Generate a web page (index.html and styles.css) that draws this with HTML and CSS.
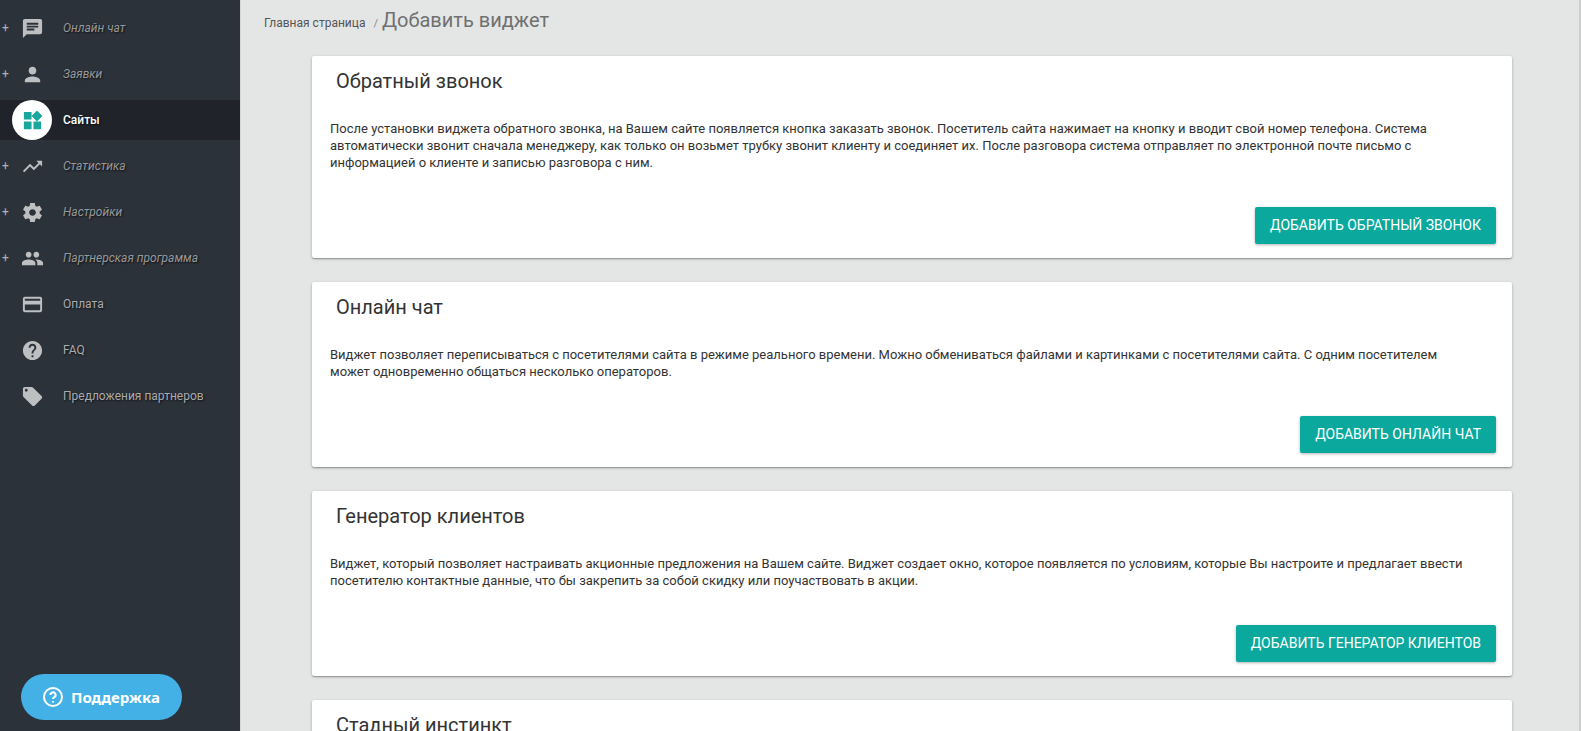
FILE: index.html
```html
<!DOCTYPE html>
<html lang="ru">

<head>
    <meta charset="UTF-8">
    <meta name="viewport" content="width=device-width, initial-scale=1.0">
    <title>Добавить виджет</title>
    <link rel="stylesheet" href="styles.css">
</head>

<body>
    <!-- Боковое меню -->
    <nav class="sidebar">
        <ul class="menu">
            <li>
                <a href="#" class="menu-item has-sub">
                    <span class="menu-icon"><svg viewBox="0 0 24 24"><path d="M20 2H4c-1.100 0-2 .9-2 2v18l4-4h14c1.100 0 2-.9 2-2V4c0-1.100-.9-2-2-2zM6 9h12v2H6V9zm8 5H6v-2h8v2zm4-6H6V6h12v2z"/></svg></span>
                    <span class="menu-text">Онлайн чат</span>
                </a>
            </li>
            <li>
                <a href="#" class="menu-item has-sub">
                    <span class="menu-icon"><svg viewBox="0 0 24 24"><path d="M12 12c2.210 0 4-1.790 4-4s-1.790-4-4-4-4 1.790-4 4 1.790 4 4 4zm0 2c-2.670 0-8 1.340-8 4v2h16v-2c0-2.660-5.330-4-8-4z"/></svg></span>
                    <span class="menu-text">Заявки</span>
                </a>
            </li>
            <li>
                <a href="#" class="menu-item active">
                    <span class="menu-icon"><svg viewBox="0 0 24 24"><path d="M13 13v8h8v-8h-8zM3 21h8v-8H3v8zM3 3v8h8V3H3zm13.660-1.310L11 7.340 16.660 13l5.660-5.660-5.660-5.650z"/></svg></span>
                    <span class="menu-text">Сайты</span>
                </a>
            </li>
            <li>
                <a href="#" class="menu-item has-sub">
                    <span class="menu-icon"><svg viewBox="0 0 24 24"><path d="M16 6l2.290 2.290-4.880 4.880-4-4L2 16.590 3.410 18l6-6 4 4 6.300-6.290L22 12V6z"/></svg></span>
                    <span class="menu-text">Статистика</span>
                </a>
            </li>
            <li>
                <a href="#" class="menu-item has-sub">
                    <span class="menu-icon"><svg viewBox="0 0 24 24"><path d="M19.430 12.980c.04-.32.07-.64.07-.98s-.03-.66-.07-.98l2.110-1.650c.19-.15.24-.42.12-.64l-2-3.460c-.12-.22-.39-.3-.61-.22l-2.490 1c-.52-.4-1.080-.73-1.690-.98l-.38-2.650C14.460 2.180 14.250 2 14 2h-4c-.25 0-.46.18-.49.42l-.38 2.650c-.61.25-1.170.59-1.690.98l-2.490-1c-.23-.09-.49 0-.61.22l-2 3.460c-.13.22-.07.49.12.64l2.110 1.650c-.04.32-.07.65-.07.98s.03.66.07.98l-2.110 1.650c-.19.15-.24.42-.12.64l2 3.460c.12.22.39.3.61.22l2.490-1c.52.4 1.080.73 1.690.98l.38 2.650c.03.24.24.42.49.42h4c.25 0 .46-.18.49-.42l.38-2.650c.61-.25 1.170-.59 1.690-.98l2.490 1c.23.09.49 0 .61-.22l2-3.460c.12-.22.07-.49-.12-.64l-2.110-1.650zM12 15.500c-1.930 0-3.500-1.570-3.500-3.500s1.570-3.500 3.500-3.500 3.500 1.570 3.500 3.500-1.570 3.500-3.500 3.500z"/></svg></span>
                    <span class="menu-text">Настройки</span>
                </a>
            </li>
            <li>
                <a href="#" class="menu-item has-sub">
                    <span class="menu-icon"><svg viewBox="0 0 24 24"><path d="M16 11c1.660 0 2.990-1.340 2.990-3S17.660 5 16 5c-1.660 0-3 1.340-3 3s1.340 3 3 3zm-8 0c1.660 0 2.990-1.340 2.990-3S9.660 5 8 5C6.340 5 5 6.340 5 8s1.340 3 3 3zm0 2c-2.330 0-7 1.170-7 3.500V19h14v-2.500c0-2.330-4.670-3.500-7-3.500zm8 0c-.29 0-.62.02-.97.05 1.160.84 1.970 1.970 1.970 3.450V19h6v-2.500c0-2.330-4.670-3.500-7-3.500z"/></svg></span>
                    <span class="menu-text">Партнерская программа</span>
                </a>
            </li>
            <li>
                <a href="#" class="menu-item">
                    <span class="menu-icon"><svg viewBox="0 0 24 24"><path d="M20 4H4c-1.110 0-1.990.89-1.990 2L2 18c0 1.110.89 2 2 2h16c1.110 0 2-.89 2-2V6c0-1.110-.89-2-2-2zm0 14H4v-6h16v6zm0-10H4V6h16v2z"/></svg></span>
                    <span class="menu-text">Оплата</span>
                </a>
            </li>
            <li>
                <a href="#" class="menu-item">
                    <span class="menu-icon"><svg viewBox="0 0 24 24"><path d="M12 2C6.480 2 2 6.480 2 12s4.480 10 10 10 10-4.480 10-10S17.520 2 12 2zm1 17h-2v-2h2v2zm2.070-7.750l-.9.920C13.450 12.900 13 13.500 13 15h-2v-.5c0-1.100.45-2.100 1.170-2.830l1.240-1.260c.37-.36.59-.86.59-1.410 0-1.100-.9-2-2-2s-2 .9-2 2H8c0-2.210 1.790-4 4-4s4 1.790 4 4c0 .88-.36 1.680-.93 2.250z"/></svg></span>
                    <span class="menu-text">FAQ</span>
                </a>
            </li>
            <li>
                <a href="#" class="menu-item">
                    <span class="menu-icon"><svg viewBox="0 0 24 24"><path d="M21.410 11.580l-9-9C12.050 2.220 11.550 2 11 2H4c-1.100 0-2 .9-2 2v7c0 .55.22 1.050.59 1.420l9 9c.36.36.86.58 1.410.58.55 0 1.050-.22 1.410-.59l7-7c.37-.36.59-.86.59-1.410 0-.55-.23-1.060-.59-1.420zM5.500 7C4.670 7 4 6.330 4 5.500S4.670 4 5.500 4 7 4.670 7 5.500 6.330 7 5.500 7z"/></svg></span>
                    <span class="menu-text">Предложения партнеров</span>
                </a>
            </li>
        </ul>
    </nav>

    <!-- Содержимое страницы -->
    <main class="content">
        <div class="breadcrumbs">
            <a href="#">Главная страница</a>
            <span class="separator">/</span>
            <h1>Добавить виджет</h1>
        </div>

        <div class="cards">
            <section class="card">
                <h2>Обратный звонок</h2>
                <p>После установки виджета обратного звонка, на Вашем сайте появляется кнопка заказать звонок. Посетитель сайта нажимает на кнопку и вводит свой номер телефона. Система автоматически звонит сначала менеджеру, как только он возьмет трубку звонит клиенту и соединяет их. После разговора система отправляет по электронной почте письмо с информацией о клиенте и записью разговора с ним.</p>
                <button type="button" class="btn">Добавить обратный звонок</button>
            </section>

            <section class="card">
                <h2>Онлайн чат</h2>
                <p>Виджет позволяет переписываться с посетителями сайта в режиме реального времени. Можно обмениваться файлами и картинками с посетителями сайта. С одним посетителем может одновременно общаться несколько операторов.</p>
                <button type="button" class="btn">Добавить онлайн чат</button>
            </section>

            <section class="card">
                <h2>Генератор клиентов</h2>
                <p>Виджет, который позволяет настраивать акционные предложения на Вашем сайте. Виджет создает окно, которое появляется по условиям, которые Вы настроите и предлагает ввести посетителю контактные данные, что бы закрепить за собой скидку или поучаствовать в акции.</p>
                <button type="button" class="btn">Добавить генератор клиентов</button>
            </section>

            <section class="card">
                <h2>Стадный инстинкт</h2>
            </section>
        </div>
    </main>

    <!-- Кнопка поддержки -->
    <button type="button" class="support-btn">
        <svg viewBox="0 0 20 20"><circle cx="10" cy="10" r="9"/><path d="M7.400 8a2.600 2.600 0 1 1 3.900 2.200c-.9.500-1.300.9-1.300 1.800"/><path d="M10 14v1.600"/></svg>
        <span>Поддержка</span>
    </button>
</body>

</html>
```

FILE: styles.css
```css
/* Общие стили */
* {
    box-sizing: border-box;
}

body {
    margin: 0;
    height: 100vh;
    display: flex;
    overflow: hidden;
    font-family: Roboto, "Liberation Sans", sans-serif;
    font-size: 13px;
    color: #333;
    background-color: #e4e6e5;
}

/* Боковое меню */
.sidebar {
    flex: 0 0 240px;
    background-color: #2c323a;
}

.menu {
    display: flex;
    flex-direction: column;
    gap: 6px;
    margin: 0;
    padding: 8px 0;
    list-style: none;
}

.menu-item {
    position: relative;
    display: flex;
    align-items: center;
    gap: 11px;
    height: 40px;
    padding-left: 12px;
    color: #a9abae;
    font-size: 12px;
    text-decoration: none;
    text-shadow: 1px 1px 2px rgba(0, 0, 0, 0.7);
}

/* Пункты с подменю */
.has-sub {
    color: #97999b;
    font-style: italic;
}

.has-sub::before {
    content: "+";
    position: absolute;
    left: 2px;
    color: #b0b2b4;
    font-style: normal;
    text-shadow: none;
}

.menu-icon {
    display: flex;
    align-items: center;
    justify-content: center;
    width: 40px;
    height: 40px;
    border-radius: 50%;
}

.menu-icon svg {
    width: 23px;
    height: 23px;
    fill: #bebfc1;
}

/* Активный пункт */
.menu-item.active {
    background-color: #20242a;
    color: #fff;
    font-weight: 500;
}

.active .menu-icon {
    background-color: #fff;
}

.active .menu-icon svg {
    fill: #18a79d;
}

/* Содержимое */
.content {
    flex: 1;
    min-width: 0;
    overflow: hidden;
    border-right: 2px solid #cbcdcc;
    border-left: 1px solid #d4d7d9;
}

/* Хлебные крошки */
.breadcrumbs {
    display: flex;
    align-items: baseline;
    height: 56px;
    padding: 8px 23px 0;
    line-height: 24px;
    font-size: 12px;
}

.breadcrumbs a {
    color: #555;
    text-decoration: none;
}

.separator {
    margin: 0 4px 0 8px;
    color: #888;
    font-size: 11px;
}

.breadcrumbs h1 {
    margin: 0;
    color: #707070;
    font-size: 20px;
    font-weight: 400;
}

/* Карточки виджетов */
.cards {
    display: flex;
    flex-direction: column;
    gap: 24px;
    padding: 0 67px 24px 71px;
}

.card {
    display: flex;
    flex-direction: column;
    align-items: flex-start;
    padding: 0 16px 14px;
    border-radius: 2px;
    background-color: #fff;
    box-shadow: 0 1px 3px rgba(0, 0, 0, 0.25), 0 1px 1px rgba(0, 0, 0, 0.2);
}

.card h2 {
    margin: 0 0 14px;
    padding: 0 8px;
    line-height: 50px;
    font-size: 20px;
    font-weight: 400;
}

.card p {
    margin: 0 0 36px;
    padding: 0 20px 0 2px;
    line-height: 17px;
}

.btn {
    align-self: flex-end;
    height: 37px;
    padding: 0 15px 2px;
    border: none;
    border-radius: 2px;
    background-color: #0ba89e;
    color: #fff;
    font-family: inherit;
    font-size: 14px;
    text-transform: uppercase;
    cursor: pointer;
    box-shadow: 0 1px 3px rgba(0, 0, 0, 0.3);
}

.btn:hover {
    background-color: #0a988f;
}

/* Кнопка поддержки */
.support-btn {
    position: fixed;
    left: 21px;
    bottom: 11px;
    display: flex;
    align-items: center;
    gap: 8px;
    height: 46px;
    padding: 0 22px;
    border: none;
    border-radius: 23px;
    background-color: #44b1e6;
    color: #fff;
    font-family: "Noto Sans", sans-serif;
    font-size: 15px;
    font-weight: 700;
    cursor: pointer;
}

.support-btn svg {
    width: 20px;
    height: 20px;
    fill: none;
    stroke: #fff;
    stroke-width: 2;
}
```
